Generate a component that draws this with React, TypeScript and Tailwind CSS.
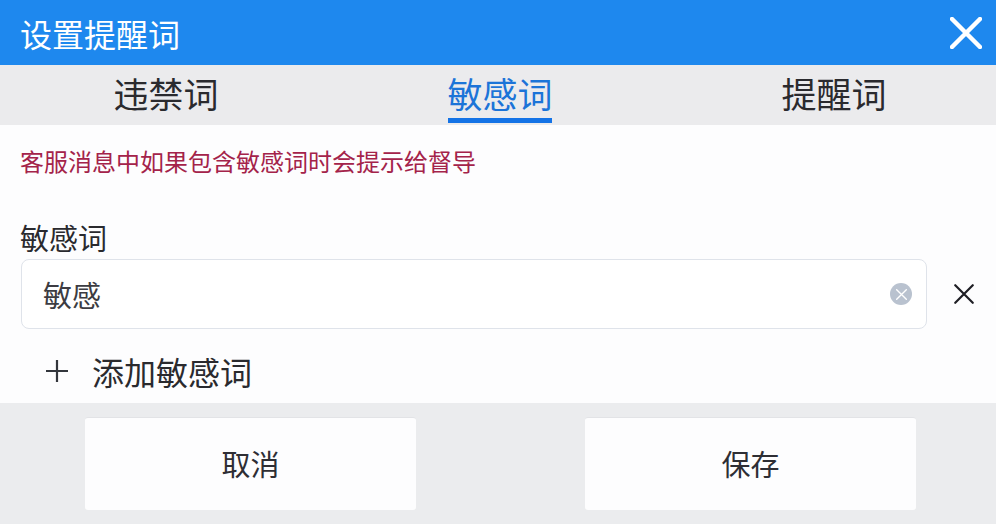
const font = { fontFamily: '"Noto Sans CJK SC", "Liberation Sans", sans-serif' };

const tabs = [
  { label: '违禁词', active: false },
  { label: '敏感词', active: true },
  { label: '提醒词', active: false },
];

function CloseIcon({ size, stroke, color }: { size: number; stroke: number; color: string }) {
  return (
    <svg width={size} height={size} viewBox="0 0 32 32" fill="none" stroke={color} strokeWidth={stroke} strokeLinecap="round">
      <path d="M2 2 L30 30 M30 2 L2 30" />
    </svg>
  );
}

export default function App() {
  return (
    <div className="w-[996px] h-[524px] flex flex-col overflow-hidden bg-[#fdfdfe] font-normal" style={font}>
      {/* Header */}
      <div className="h-[65px] shrink-0 bg-[#1e88ee] flex items-center justify-between pl-5 pr-[14px]">
        <span className="text-[32px] leading-none text-white">设置提醒词</span>
        <CloseIcon size={32} stroke={4.5} color="#ffffff" />
      </div>

      {/* Tabs */}
      <div className="h-[60px] shrink-0 bg-[#ebebed] flex justify-between pl-[114px] pr-[110px]">
        {tabs.map((t) => (
          <div
            key={t.label}
            className={`h-[58px] w-[104px] flex items-center justify-center whitespace-nowrap text-[35px] leading-none pt-[2px] border-b-[5px] ${
              t.active ? 'text-[#1c74d8] border-[#1473e6]' : 'text-[#2a2a2e] border-transparent'
            }`}
          >
            {t.label}
          </div>
        ))}
      </div>

      {/* Body */}
      <div className="flex-1 flex flex-col">
        <p className="pl-5 mt-[24px] text-[24px] leading-[24px] text-[#a4234a]">客服消息中如果包含敏感词时会提示给督导</p>
        <label className="pl-5 mt-[49px] text-[29px] leading-[30px] text-[#2a2a2e]">敏感词</label>
        <div className="flex items-center mt-[7px] pl-[21px]">
          <div className="w-[906px] h-[70px] rounded-lg border border-[#dfe3ea] bg-white flex items-center justify-between pl-[21px] pr-[14px]">
            <span className="text-[29px] leading-none text-[#3c3c42]">敏感</span>
            <span className="w-[22px] h-[22px] rounded-full bg-[#b9c2cf] flex items-center justify-center">
              <CloseIcon size={11} stroke={4} color="#ffffff" />
            </span>
          </div>
          <span className="ml-[27px]">
            <CloseIcon size={20} stroke={3.5} color="#1e1e24" />
          </span>
        </div>
        <div className="flex items-center pl-[46px] mt-[24px]">
          <svg width="22" height="22" viewBox="0 0 22 22" fill="none" stroke="#33363c" strokeWidth="2.2">
            <path d="M11 0 V22 M0 11 H22" />
          </svg>
          <span className="ml-[24px] text-[32px] leading-[36px] text-[#2a2a2e]">添加敏感词</span>
        </div>
      </div>

      {/* Footer */}
      <div className="h-[121px] shrink-0 bg-[#ebecee] flex justify-between pl-[85px] pr-[80px] pt-[14px]">
        {['取消', '保存'].map((b) => (
          <button key={b} className="w-[331px] h-[93px] rounded-[3px] bg-[#fdfdfe] border-t border-[#e2e3e6] text-[29px] text-[#2e2e34]">
            {b}
          </button>
        ))}
      </div>
    </div>
  );
}
